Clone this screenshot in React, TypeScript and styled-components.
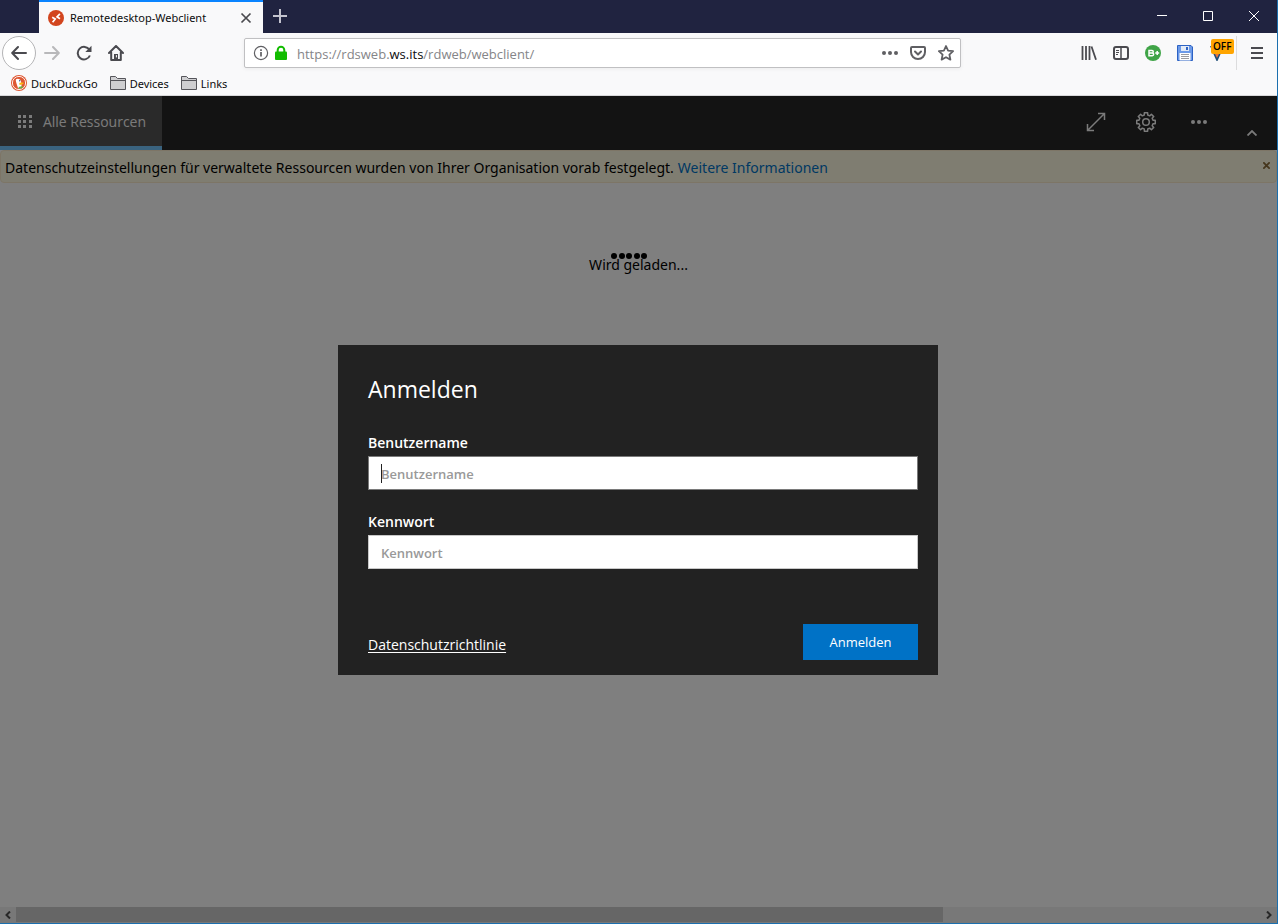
import React from "react";
import styled, { createGlobalStyle } from "styled-components";

const GlobalStyle = createGlobalStyle`
  *, *::before, *::after { box-sizing: border-box; }
  html, body, #root { height: 100%; }
  body {
    margin: 0;
    font-family: "Open Sans", "Noto Sans", sans-serif;
    background: #f9f9fa;
  }
  button, input { font-family: inherit; }
`;

const Window = styled.div`
  display: flex;
  flex-direction: column;
  min-height: 100%;
  border-right: 1px solid #1b6fae;
  border-bottom: 1px solid #1b6fae;
`;

const TitleBar = styled.header`
  display: flex;
  height: 33px;
  padding-left: 39px;
  background: #202340;
`;

const Tab = styled.div`
  display: flex;
  align-items: center;
  width: 224px;
  padding: 0 9px;
  gap: 6px;
  border-top: 2px solid #0a84ff;
  background: #f9f9fa;
  font-family: "Noto Sans", sans-serif;
  font-size: 11px;
  color: #0c0c0d;
`;

const TabTitle = styled.span`
  flex: 1;
  white-space: nowrap;
`;

const PlainButton = styled.button`
  display: inline-flex;
  align-items: center;
  justify-content: center;
  padding: 0;
  border: 0;
  background: none;
  color: inherit;
`;

const NewTab = styled(PlainButton)`
  width: 34px;
  padding-bottom: 2px;
  color: #c4c4cf;
`;

const WindowButtons = styled.div`
  display: flex;
  margin-left: auto;
  color: #ffffff;
`;

const WindowButton = styled(PlainButton)`
  width: 46px;
  padding-bottom: 2px;
`;

const Toolbar = styled.nav`
  display: flex;
  align-items: center;
  height: 40px;
  padding-left: 2px;
  background: #f9f9fa;
  color: #4a4a4f;
`;

const NavGroup = styled.div`
  display: flex;
  align-items: center;
  flex: 0 0 242px;
`;

const NavButton = styled(PlainButton)<{ $dim?: boolean }>`
  width: 32px;
  height: 32px;
  color: ${(p) => (p.$dim ? "#b8b8ba" : "#4a4a4f")};
`;

const BackButton = styled(PlainButton)`
  width: 34px;
  height: 34px;
  border: 1px solid #b4b4b6;
  border-radius: 50%;
  background: #ffffff;
`;

const AddressBar = styled.div`
  display: flex;
  align-items: center;
  flex: 701 1 0;
  height: 30px;
  padding: 0 6px 0 8px;
  border: 1px solid #c0c0c2;
  border-radius: 2px;
  background: #ffffff;
  box-shadow: 0 1px 4px rgba(0, 0, 0, 0.06);
  color: #5f5f63;
`;

const Url = styled.span`
  flex: 1;
  padding: 2px 0 0 6px;
  font-size: 13px;
  color: #858588;
  white-space: nowrap;

  b { font-weight: 400; color: #0c0c0d; }
`;

const AddressIcons = styled.div`
  display: flex;
  gap: 12px;
`;

const Extensions = styled.div`
  display: flex;
  flex: 316 1 0;
  justify-content: flex-end;
  align-items: center;
`;

const MenuSlot = styled.div`
  display: flex;
  align-items: center;
  justify-content: center;
  height: 34px;
  width: 41px;
  margin-left: 3px;
  border-left: 1px solid #dcdcdd;
`;

const BadgeHost = styled.span`
  position: relative;
  display: inline-flex;
`;

const OffBadge = styled.span`
  position: absolute;
  top: -6px;
  left: 2px;
  padding: 0 2px;
  border-radius: 2px;
  background: #ffa500;
  color: #000000;
  font-size: 10px;
  font-weight: 600;
  line-height: 15px;
`;

const Bookmarks = styled.div`
  display: flex;
  align-items: center;
  gap: 12px;
  height: 23px;
  padding: 0 11px 2px;
  border-bottom: 1px solid #d8d8da;
  background: #f9f9fa;
`;

const Bookmark = styled.a`
  display: flex;
  align-items: center;
  gap: 4px;
  font-family: "Noto Sans", sans-serif;
  font-size: 11px;
  color: #0c0c0d;
  text-decoration: none;
`;

const Page = styled.main`
  position: relative;
  display: flex;
  flex-direction: column;
  flex: 1;
  background: #ffffff;
`;

const AppBar = styled.div`
  display: flex;
  height: 54px;
  background: #262626;
  color: #f6f6f6;
`;

const ResourceTab = styled(PlainButton)`
  gap: 11px;
  width: 162px;
  padding-left: 2px;
  border-bottom: 4px solid #74c6ff;
  background: #545454;
  font-size: 14px;
`;

const AppActions = styled.div`
  display: flex;
  margin-left: auto;
  padding-right: 15px;
`;

const AppButton = styled(PlainButton)<{ $w: number }>`
  width: ${(p) => p.$w}px;
  height: 52px;
`;

const CollapseButton = styled(PlainButton)`
  align-self: flex-end;
  width: 20px;
  height: 34px;
  margin-left: 15px;
`;

const Notice = styled.div`
  display: flex;
  align-items: center;
  height: 33px;
  padding: 2px 6px 0 4px;
  border: 1px solid #faebcc;
  border-radius: 4px;
  background: #fffae2;
  font-family: "Noto Sans", sans-serif;
  font-size: 14px;
  color: #000000;

  a { margin-left: 4px; color: #0072c6; text-decoration: none; }
`;

const CloseNotice = styled(PlainButton)`
  margin-left: auto;
  padding-bottom: 4px;
  color: #8a6d3b;
`;

const Loading = styled.div`
  position: relative;
  align-self: center;
  margin-top: 72px;
  font-family: "Noto Sans", sans-serif;
  font-size: 14px;
  line-height: 20px;
  color: #000000;
`;

const Dots = styled.span`
  position: absolute;
  top: -2px;
  left: 22px;
  display: flex;
  justify-content: space-between;
  width: 36px;

  i {
    width: 6px;
    height: 6px;
    border-radius: 50%;
    background: #000000;
  }
`;

const ScrollBar = styled.div`
  display: flex;
  height: 16px;
  margin-top: auto;
  padding-bottom: 1px;
  background: #f0f0f0;
  color: #505050;
`;

const ScrollArrow = styled(PlainButton)`
  width: 16px;
`;

const Thumb = styled.div`
  flex: 927;
  background: #cdcdcd;
`;

const Track = styled.div`
  flex: 318;
`;

const Backdrop = styled.div`
  position: absolute;
  inset: 0;
  display: flex;
  align-items: center;
  justify-content: center;
  padding-right: 1px;
  background: rgba(0, 0, 0, 0.5);
`;

const Dialog = styled.form`
  display: flex;
  flex-direction: column;
  width: 600px;
  max-width: 100%;
  padding: 27px 20px 15px 30px;
  background: #222222;
  color: #ffffff;
`;

const Title = styled.h1`
  margin: 0 0 27px;
  font-size: 23px;
  font-weight: 400;
  line-height: 34px;
`;

const Field = styled.div`
  position: relative;
  display: flex;
  flex-direction: column;
  margin-bottom: 22px;
`;

const Label = styled.label`
  margin-bottom: 4px;
  font-size: 14px;
  font-weight: 600;
  line-height: 19px;
`;

const TextInput = styled.input<{ $active?: boolean }>`
  height: 34px;
  padding: 2px 12px 0;
  border: 1px solid ${(p) => (p.$active ? "#7a7a7a" : "#c8c8c8")};
  border-radius: 0;
  background: #ffffff;
  font-size: 13px;
  font-weight: 600;
  color: #222222;
  outline: 0;

  &::placeholder { color: #999999; opacity: 1; }
`;

const Caret = styled.span`
  position: absolute;
  bottom: 7px;
  left: 13px;
  width: 1px;
  height: 19px;
  background: #222222;
`;

const Footer = styled.div`
  display: flex;
  align-items: center;
  justify-content: space-between;
  margin-top: 33px;
`;

const PolicyLink = styled.a`
  padding-top: 6px;
  font-size: 14px;
  color: #ffffff;
  text-underline-offset: 2px;
`;

const Submit = styled.button`
  width: 115px;
  height: 36px;
  border: 0;
  background: #0072c6;
  color: #ffffff;
  font-size: 13px;
`;

const FolderIcon = () => (
  <svg width="16" height="14" viewBox="0 0 16 14">
    <path d="M.5 13.5V.5h5l2 2h8v11z" fill="#cfcfd1" stroke="#55555a" />
    <path d="M1 4.5h14" stroke="#55555a" />
  </svg>
);

const RemoteIcon = () => (
  <svg width="16" height="16" viewBox="0 0 16 16">
    <circle cx="8" cy="8" r="8" fill="#d2451e" />
    <path d="M4.200 7.200l3 1.800-2.600 3.200M11.900 3.800L9 6.800l3 2" fill="none" stroke="#fff" strokeWidth="1.700" />
  </svg>
);

const DuckIcon = () => (
  <svg width="16" height="16" viewBox="0 0 16 16">
    <circle cx="8" cy="8" r="8" fill="#de5833" />
    <circle cx="8" cy="8" r="6.600" fill="none" stroke="#fff" strokeWidth=".9" />
    <path d="M5 4.200c1.600-1.200 4.600-.4 5 2.100l.4 2.500.2 3.900c-1.200.6-2.600.7-3.600.3L5.500 8.500C5 6.500 4.500 5.400 5 4.200z" fill="#fff" />
    <path d="M8.300 7.800l4.200-.4-.2 1.500-3.700 1.200z" fill="#fdb813" />
    <path d="M7.500 12l4-1v2l-3.500.8z" fill="#5fb548" />
    <circle cx="8.700" cy="5.800" r=".7" fill="#2d4f8e" />
  </svg>
);

const GridIcon = () => (
  <svg width="14" height="13" viewBox="0 0 14 13" fill="currentColor">
    {[0, 5, 10].map((y) =>
      [0, 5, 11].map((x) => <rect key={`${x}-${y}`} x={x} y={y} width="3" height="3" />)
    )}
  </svg>
);

const GEAR = (() => {
  const pts: string[] = [];
  const point = (r: number, deg: number) => {
    const a = (deg * Math.PI) / 180;
    return `${(10 + r * Math.cos(a)).toFixed(2)} ${(10 + r * Math.sin(a)).toFixed(2)}`;
  };
  for (let i = 0; i < 8; i++) {
    const c = i * 45;
    pts.push(point(7.2, c - 14), point(9.4, c - 10), point(9.4, c + 10), point(7.2, c + 14));
  }
  return `M${pts.join("L")}Z`;
})();

export default function App() {
  return (
    <>
      <GlobalStyle />
      <Window>
        <TitleBar>
          <Tab>
            <RemoteIcon />
            <TabTitle>Remotedesktop-Webclient</TabTitle>
            <PlainButton aria-label="Tab schließen">
              <svg width="16" height="16" viewBox="0 0 16 16" stroke="#4a4a4f" strokeWidth="1.700">
                <path d="M3.500 3.500l9 9M12.500 3.500l-9 9" />
              </svg>
            </PlainButton>
          </Tab>
          <NewTab aria-label="Neuer Tab">
            <svg width="14" height="14" viewBox="0 0 14 14" stroke="currentColor" strokeWidth="2">
              <path d="M7 0v14M0 7h14" />
            </svg>
          </NewTab>
          <WindowButtons>
            <WindowButton aria-label="Minimieren">
              <svg width="10" height="10" viewBox="0 0 10 10" stroke="currentColor"><path d="M0 4.500h10" /></svg>
            </WindowButton>
            <WindowButton aria-label="Maximieren">
              <svg width="10" height="10" viewBox="0 0 10 10" fill="none" stroke="currentColor">
                <path d="M.5.5h9v9h-9z" />
              </svg>
            </WindowButton>
            <WindowButton aria-label="Schließen">
              <svg width="10" height="10" viewBox="0 0 10 10" stroke="currentColor">
                <path d="M0 0l10 10M10 0L0 10" />
              </svg>
            </WindowButton>
          </WindowButtons>
        </TitleBar>

        <Toolbar>
          <NavGroup>
            <BackButton aria-label="Zurück">
              <svg width="16" height="16" viewBox="0 0 16 16" fill="none" stroke="#4a4a4f" strokeWidth="2" strokeLinecap="round" strokeLinejoin="round">
                <path d="M15 8H1.500M7 2L1.200 8 7 14" />
              </svg>
            </BackButton>
            <NavButton $dim aria-label="Vor">
              <svg width="16" height="16" viewBox="0 0 16 16" fill="none" stroke="currentColor" strokeWidth="2" strokeLinecap="round" strokeLinejoin="round">
                <path d="M1 8h13.500M9 2l5.800 6L9 14" />
              </svg>
            </NavButton>
            <NavButton aria-label="Neu laden">
              <svg width="16" height="16" viewBox="0 0 16 16" fill="none" stroke="currentColor" strokeWidth="2">
                <path d="M13.400 4.800A6.300 6.300 0 1 0 13.900 10.500" />
                <path d="M15.500 .8v6.200H9.300z" fill="currentColor" stroke="none" />
              </svg>
            </NavButton>
            <NavButton aria-label="Startseite">
              <svg width="16" height="16" viewBox="0 0 16 16" fill="none" stroke="currentColor" strokeWidth="2" strokeLinecap="round" strokeLinejoin="round">
                <path d="M1 8l7-7 7 7M3.200 7.500V15h9.600V7.500" />
                <path d="M6 9h4v5.500H6z" fill="currentColor" stroke="none" />
                <path d="M8.400 10.500v1.500" stroke="#fff" strokeWidth="1" />
              </svg>
            </NavButton>
          </NavGroup>

          <AddressBar>
            <svg width="16" height="16" viewBox="0 0 16 16" fill="none" stroke="currentColor">
              <circle cx="8" cy="8" r="6.600" strokeWidth="1.200" />
              <path d="M8 7v4.500M8 4.200V6" strokeWidth="1.700" />
            </svg>
            <svg width="22" height="16" viewBox="0 0 22 16">
              <path d="M8.700 7V5a3.300 3.300 0 0 1 6.600 0v2" fill="none" stroke="#12bc00" strokeWidth="2" />
              <rect x="6" y="6.500" width="12" height="8.500" rx="1" fill="#12bc00" />
            </svg>
            <Url>
              https://rdsweb.<b>ws.its</b>/rdweb/webclient/
            </Url>
            <AddressIcons>
              <PlainButton aria-label="Seitenaktionen">
                <svg width="16" height="16" viewBox="0 0 16 16" fill="currentColor">
                  <circle cx="2" cy="8" r="2" /><circle cx="8" cy="8" r="2" /><circle cx="14" cy="8" r="2" />
                </svg>
              </PlainButton>
              <PlainButton aria-label="In Pocket speichern">
                <svg width="16" height="16" viewBox="0 0 16 16" fill="none" stroke="currentColor" strokeWidth="2" strokeLinejoin="round" strokeLinecap="round">
                  <path d="M2 2h12a1 1 0 0 1 1 1v4a7 7 0 0 1-14 0V3a1 1 0 0 1 1-1z" />
                  <path d="M5 6.500l3 3 3-3" />
                </svg>
              </PlainButton>
              <PlainButton aria-label="Lesezeichen">
                <svg width="16" height="16" viewBox="0 0 16 16" fill="none" stroke="currentColor" strokeWidth="1.800" strokeLinejoin="round">
                  <path d="M8 1l2.100 4.600 5 .6-3.700 3.400 1 5L8 12.200l-4.400 2.400 1-5L.9 6.200l5-.6z" />
                </svg>
              </PlainButton>
            </AddressIcons>
          </AddressBar>

          <Extensions>
            <NavButton aria-label="Bibliothek">
              <svg width="16" height="16" viewBox="0 0 16 16" fill="none" stroke="currentColor" strokeWidth="2">
                <path d="M1.500 1v14M5 1v14M8.500 1v14M10.500 1.500L15 14.800" strokeWidth="1.800" />
              </svg>
            </NavButton>
            <NavButton aria-label="Seitenleiste">
              <svg width="16" height="16" viewBox="0 0 16 16" fill="none" stroke="currentColor">
                <rect x="1" y="2" width="14" height="12" rx="2" strokeWidth="2" />
                <path d="M8 2v12" strokeWidth="1.500" />
                <path d="M3 5.500h3M3 7.500h3M3 9.500h2" />
              </svg>
            </NavButton>
            <NavButton aria-label="Erweiterung">
              <svg width="16" height="16" viewBox="0 0 16 16" fill="none" stroke="#fff">
                <circle cx="8" cy="8" r="8" fill="#3fa447" stroke="none" />
                <path d="M4 5.500h3a1.200 1.200 0 0 1 0 2.500H4h3.300a1.300 1.300 0 0 1 0 2.700H4z" strokeWidth="1.500" />
                <path d="M10.200 8h4M12.200 6v4" strokeWidth="1.500" />
              </svg>
            </NavButton>
            <NavButton aria-label="Speichern">
              <svg width="16" height="16" viewBox="0 0 16 16">
                <path d="M.5.5h13.500L15.500 2v13.500H.5z" fill="#6c9ae8" stroke="#2c62c4" />
                <path d="M4 1h8v5H4z" fill="#e2eaf6" />
                <path d="M9 2h2v3H9z" fill="#2c62c4" />
                <path d="M2.500 8h11v7.500h-11z" fill="#fff" />
                <path d="M4 9.500h8M4 11.500h8M4 13.500h8" stroke="#9c9ca0" />
              </svg>
            </NavButton>
            <NavButton aria-label="Erweiterung aus">
              <BadgeHost>
                <svg width="16" height="16" viewBox="0 0 16 16">
                  <path d="M1 1h14L8.500 16h-1z" fill="#1f4e78" />
                  <path d="M5 7h6l-3 6z" fill="#e8743b" />
                </svg>
                <OffBadge>OFF</OffBadge>
              </BadgeHost>
            </NavButton>
            <MenuSlot>
              <NavButton aria-label="Menü">
                <svg width="12" height="12" viewBox="0 0 12 12" stroke="currentColor" strokeWidth="2">
                  <path d="M0 1h12M0 6h12M0 11h12" />
                </svg>
              </NavButton>
            </MenuSlot>
          </Extensions>
        </Toolbar>

        <Bookmarks>
          <Bookmark href="#"><DuckIcon />DuckDuckGo</Bookmark>
          <Bookmark href="#"><FolderIcon />Devices</Bookmark>
          <Bookmark href="#"><FolderIcon />Links</Bookmark>
        </Bookmarks>

        <Page>
          <AppBar>
            <ResourceTab><GridIcon />Alle Ressourcen</ResourceTab>
            <AppActions>
              <AppButton $w={50} aria-label="Vollbild">
                <svg width="20" height="20" viewBox="0 0 20 20" fill="none" stroke="currentColor" strokeWidth="1.500">
                  <path d="M1.500 18.500l17-17M12 1.500h6.500V8M1.500 12v6.500H8" />
                </svg>
              </AppButton>
              <AppButton $w={50} aria-label="Einstellungen">
                <svg width="20" height="20" viewBox="0 0 20 20" fill="none" stroke="currentColor" strokeWidth="1.500" strokeLinejoin="round">
                  <path d={GEAR} />
                  <circle cx="10" cy="10" r="3.300" />
                </svg>
              </AppButton>
              <AppButton $w={56} aria-label="Mehr">
                <svg width="16" height="4" viewBox="0 0 16 4" fill="currentColor">
                  <circle cx="2" cy="2" r="2" /><circle cx="8" cy="2" r="2" /><circle cx="14" cy="2" r="2" />
                </svg>
              </AppButton>
              <CollapseButton aria-label="Einklappen">
                <svg width="10" height="6" viewBox="0 0 10 6" fill="none" stroke="currentColor" strokeWidth="1.800">
                  <path d="M.5 5.500L5 1l4.500 4.500" />
                </svg>
              </CollapseButton>
            </AppActions>
          </AppBar>

          <Notice>
            Datenschutzeinstellungen für verwaltete Ressourcen wurden von Ihrer Organisation vorab festgelegt.
            <a href="#">Weitere Informationen</a>
            <CloseNotice aria-label="Hinweis schließen">
              <svg width="7" height="7" viewBox="0 0 7 7" stroke="currentColor" strokeWidth="1.800">
                <path d="M.3.300l6.400 6.400M6.700.3L.3 6.700" />
              </svg>
            </CloseNotice>
          </Notice>

          <Loading>
            <Dots><i /><i /><i /><i /><i /></Dots>
            Wird geladen...
          </Loading>

          <ScrollBar>
            <ScrollArrow aria-label="Nach links">
              <svg width="6" height="8" viewBox="0 0 6 8" fill="none" stroke="currentColor" strokeWidth="2"><path d="M5 .5L1.500 4 5 7.500" /></svg>
            </ScrollArrow>
            <Thumb />
            <Track />
            <ScrollArrow aria-label="Nach rechts">
              <svg width="6" height="8" viewBox="0 0 6 8" fill="none" stroke="currentColor" strokeWidth="2"><path d="M1 .5L4.500 4 1 7.500" /></svg>
            </ScrollArrow>
          </ScrollBar>

          <Backdrop>
            <Dialog>
              <Title>Anmelden</Title>
              <Field>
                <Label htmlFor="user">Benutzername</Label>
                <TextInput id="user" type="text" placeholder="Benutzername" $active />
                <Caret />
              </Field>
              <Field>
                <Label htmlFor="password">Kennwort</Label>
                <TextInput id="password" type="password" placeholder="Kennwort" />
              </Field>
              <Footer>
                <PolicyLink href="#">Datenschutzrichtlinie</PolicyLink>
                <Submit type="button">Anmelden</Submit>
              </Footer>
            </Dialog>
          </Backdrop>
        </Page>
      </Window>
    </>
  );
}
